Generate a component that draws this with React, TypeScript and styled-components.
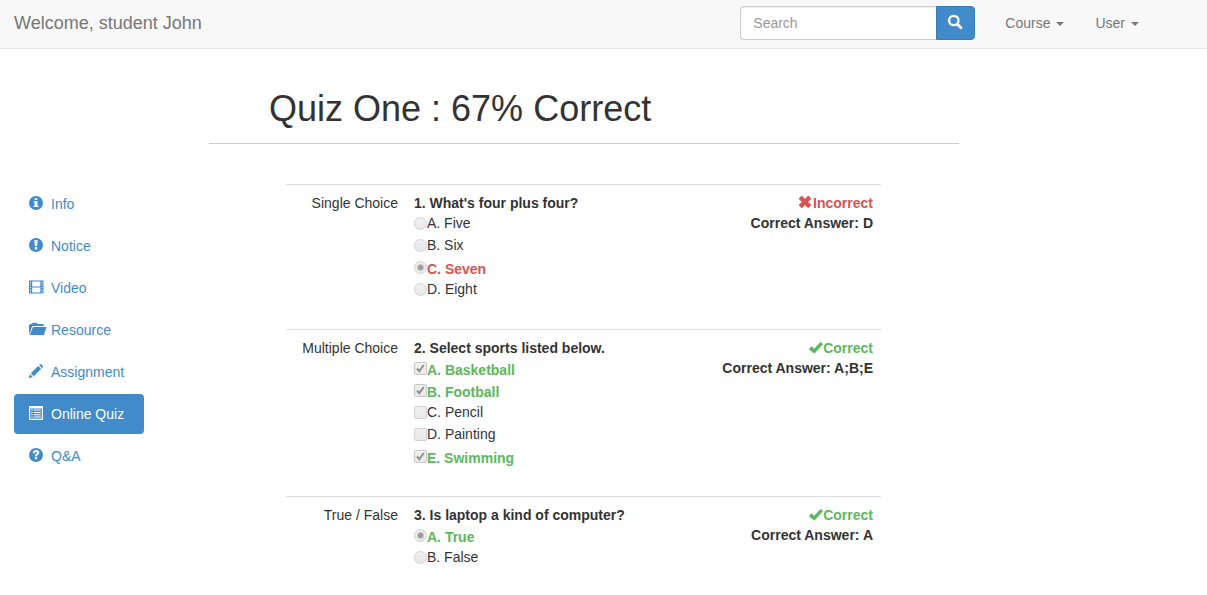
import React from "react";
import styled, { createGlobalStyle } from "styled-components";

const GlobalStyle = createGlobalStyle`
  *, *::before, *::after { box-sizing: border-box; }
  body {
    margin: 0;
    background: #fff;
    color: #333;
    font: 14px/20px "Liberation Sans", Arial, sans-serif;
  }
`;

const BLUE = "#428bca";
const GREEN = "#5cb85c";
const RED = "#d9534f";

const Navbar = styled.header`
  display: flex;
  align-items: flex-start;
  justify-content: space-between;
  height: 49px;
  padding: 0 53px 0 14px;
  background: #f8f8f8;
  border-bottom: 1px solid #e7e7e7;
`;

const Brand = styled.span`
  padding-top: 13px;
  color: #777;
  font-size: 18px;
`;

const NavRight = styled.div`
  display: flex;
  gap: 1px;
`;

const SearchForm = styled.form`
  display: flex;
  margin: 6px 14px 0 0;
`;

const SearchInput = styled.input`
  width: 196px;
  height: 34px;
  padding: 6px 12px;
  border: 1px solid #ccc;
  border-right: 0;
  border-radius: 4px 0 0 4px;
  background: #fff;
  box-shadow: inset 0 1px 1px rgba(0, 0, 0, 0.075);
  color: #555;
  font: inherit;
  outline: none;
  &::placeholder { color: #999; opacity: 1; }
`;

const SearchButton = styled.button`
  display: flex;
  align-items: center;
  justify-content: center;
  width: 39px;
  height: 34px;
  padding: 0 2px 4px 0;
  border: 1px solid #357ebd;
  border-radius: 0 4px 4px 0;
  background: ${BLUE};
  color: #fff;
  cursor: pointer;
`;

const MenuButton = styled.button`
  display: flex;
  align-items: center;
  gap: 6px;
  height: 46px;
  padding: 0 15px;
  border: 0;
  background: none;
  color: #777;
  font: inherit;
  cursor: pointer;
  &::after {
    content: "";
    margin-top: 2px;
    border: 4px solid transparent;
    border-top-color: currentColor;
    border-bottom: 0;
  }
`;

const Page = styled.div`
  display: grid;
  grid-template-columns: 130px minmax(0, 750px);
  column-gap: 65px;
  padding: 0 14px;
`;

const Sidebar = styled.nav`
  display: flex;
  flex-direction: column;
  gap: 2px;
  padding-top: 135px;
`;

const SideLink = styled.a<{ $active?: boolean }>`
  display: flex;
  align-items: flex-start;
  gap: 8px;
  padding: 10px 15px;
  border-radius: 4px;
  background: ${(p) => (p.$active ? BLUE : "transparent")};
  color: ${(p) => (p.$active ? "#fff" : BLUE)};
  text-decoration: none;
`;

const Icon = styled.svg`
  flex: none;
  width: 14px;
  height: 14px;
  margin-top: 2px;
  overflow: visible;
  fill: currentColor;
`;

const VerdictIcon = styled(Icon)`
  margin-top: 3px;
`;

const Title = styled.h1`
  margin: 0;
  padding: 40px 60px 14px;
  border-bottom: 1px solid #ccc;
  font-size: 36px;
  font-weight: 400;
  line-height: 40px;
`;

const Results = styled.div`
  padding: 40px 78px 0 77px;
`;

const QuizTable = styled.table`
  width: 100%;
  border-collapse: separate;
  border-spacing: 0;
  table-layout: fixed;
`;

const Cell = styled.td<{ $width?: string; $right?: boolean }>`
  width: ${(p) => p.$width ?? "auto"};
  padding: 8px 8px 28px;
  border-top: 1px solid #ddd;
  text-align: ${(p) => (p.$right ? "right" : "left")};
  vertical-align: top;
`;

const Question = styled.fieldset`
  min-width: 0;
  margin: 0;
  padding: 0;
  border: 0;
`;

const Prompt = styled.legend`
  padding: 0;
  font-weight: 700;
`;

const OptionRow = styled.div`
  display: flex;
  align-items: flex-start;
  height: 22px;
`;

const Mark = styled.input`
  appearance: none;
  flex: none;
  width: 13px;
  height: 13px;
  margin: 4px 0 0;
  border: 1px solid #d2d2d2;
  border-radius: ${(p) => (p.type === "radio" ? "50%" : "2px")};
  background: linear-gradient(#f0f0f0, #e8e8e8);
  &[type="radio"]:checked {
    background: radial-gradient(circle, #9c9c9c 0 2px, #ececec 4px);
  }
  &[type="checkbox"]:checked {
    border-color: #c8c8c8;
  }
`;

const CheckSlot = styled.span`
  position: relative;
  display: flex;
`;

const Tick = styled.svg`
  position: absolute;
  top: 4px;
  left: 0;
  width: 13px;
  height: 13px;
  pointer-events: none;
`;

const OptionLabel = styled.label<{ $color?: string }>`
  padding-top: ${(p) => (p.$color ? "2px" : "0")};
  color: ${(p) => p.$color ?? "inherit"};
  font-weight: ${(p) => (p.$color ? 700 : 400)};
`;

const Verdict = styled.div<{ $color: string }>`
  display: flex;
  justify-content: flex-end;
  height: 20px;
  color: ${(p) => p.$color};
  font-weight: 700;
`;

const Answer = styled.div`
  font-weight: 700;
`;

const icons: Record<string, React.ReactNode> = {
  info: (
    <path fillRule="evenodd" d="M7 0a7 7 0 1 1 0 14A7 7 0 0 1 7 0ZM5.6 2.2v1.9h2.7V2.2ZM4.6 5.3v1.2h1v3.2h-1v1.3h4.9V9.7h-1V5.3Z" />
  ),
  notice: (
    <path fillRule="evenodd" d="M7 0a7 7 0 1 1 0 14A7 7 0 0 1 7 0ZM5.2 2.2 5.9 8h2.2l.7-5.8ZM5.8 9v2.4h2.4V9Z" />
  ),
  video: (
    <path fillRule="evenodd" d="M0 .5h14.5v13H0ZM1 2v1.2h1V2Zm0 2.4v1.2h1V4.4Zm0 2.5v1.2h1V6.9Zm0 2.4v1.2h1V9.3Zm0 2.2v1.1h1v-1.1ZM12.5 2v1.2h1V2Zm0 2.4v1.2h1V4.4Zm0 2.5v1.2h1V6.9Zm0 2.4v1.2h1V9.3Zm0 2.2v1.1h1v-1.1ZM3.2 1.5v4.9h8.1V1.5Zm0 6v5h8.1v-5Z" />
  ),
  folder: (
    <path d="M0 12V3.2L1.2 2H3l.8-1.3h4L8.5 2h5.3L15 3.2V4H3.2L1.2 10 0 12ZM4 5H17.6L14.8 13H.7Z" />
  ),
  pencil: (
    <path d="M-.3 14.2 1 10.2l2.9 2.7ZM1.8 9.3 9.2 1.9 12.1 4.8 4.7 12.2ZM10.1 1l.9-.8q.6-.5 1.1 0L13.9 2q.5.5 0 1.1l-.9.8Z" />
  ),
  list: (
    <path fillRule="evenodd" d="M0 0h14v14H0ZM1.2 2.6v10.2h11.6V2.6ZM2.2 3.6h1.5v1H2.2Zm2.5 0h7v1h-7ZM2.2 6h1.5v1H2.2Zm2.5 0h7v1h-7ZM2.2 8.3h1.5v1H2.2Zm2.5 0h7v1h-7ZM2.2 10.6h1.5v1H2.2Zm2.5 0h7v1h-7Z" />
  ),
  help: (
    <path fillRule="evenodd" d="M7 0a7 7 0 1 1 0 14A7 7 0 0 1 7 0ZM3.8 5.3h2.1c0-1 .4-1.4 1.1-1.4s1 .3 1 .8c0 1-2.2 1.1-2.2 3.5h2.3c0-1.5 2.2-1.7 2.2-3.7C10.3 2.8 8.9 2 7.1 2 5.1 2 3.8 3.2 3.8 5.3ZM5.8 9.1v2.2h2.3V9.1Z" />
  ),
  remove: (
    <path d="M.1 2.3 2.3.1q.5-.5 1 0L6 2.9 8.7.1q.5-.5 1 0l2.200 2.200q.4.500 0 1L9 6l2.900 2.600q.4.500 0 1l-2.200 2.200q-.5.500-1 0L6 9l-2.700 2.800q-.5.500-1 0L.1 9.600q-.4-.5 0-1L3 6 .1 3.300q-.4-.5 0-1Z" />
  ),
  ok: (
    <path d="M.2 7.7 2.2 5.6q.4-.4.8 0L5.2 7.7 11.2 1.2q.4-.4.8 0l1.7 1.5q.4.4 0 .8L5.7 12.2q-.4.4-.8 0L.2 8.5Q-.1 8.1.2 7.7Z" />
  ),
};

const links = [
  ["info", "Info"],
  ["notice", "Notice"],
  ["video", "Video"],
  ["folder", "Resource"],
  ["pencil", "Assignment"],
  ["list", "Online Quiz"],
  ["help", "Q&A"],
];

type Quiz = {
  kind: string;
  prompt: string;
  type: "radio" | "checkbox";
  options: string[];
  chosen: number[];
  correct: boolean;
  answer: string;
};

const quizzes: Quiz[] = [
  {
    kind: "Single Choice",
    prompt: "1. What's four plus four?",
    type: "radio",
    options: ["A. Five", "B. Six", "C. Seven", "D. Eight"],
    chosen: [2],
    correct: false,
    answer: "D",
  },
  {
    kind: "Multiple Choice",
    prompt: "2. Select sports listed below.",
    type: "checkbox",
    options: ["A. Basketball", "B. Football", "C. Pencil", "D. Painting", "E. Swimming"],
    chosen: [0, 1, 4],
    correct: true,
    answer: "A;B;E",
  },
  {
    kind: "True / False",
    prompt: "3. Is laptop a kind of computer?",
    type: "radio",
    options: ["A. True", "B. False"],
    chosen: [0],
    correct: true,
    answer: "A",
  },
];

function QuizRow({ quiz, index }: { quiz: Quiz; index: number }) {
  const color = quiz.correct ? GREEN : RED;
  return (
    <tr>
      <Cell $width="120px" $right>{quiz.kind}</Cell>
      <Cell>
        <Question>
          <Prompt>{quiz.prompt}</Prompt>
          {quiz.options.map((option, i) => {
            const chosen = quiz.chosen.includes(i);
            const id = `q${index}-${i}`;
            return (
              <OptionRow key={id}>
                <CheckSlot>
                  <Mark type={quiz.type} id={id} name={`q${index}`} defaultChecked={chosen} disabled />
                  {chosen && quiz.type === "checkbox" && (
                    <Tick viewBox="0 0 13 13" aria-hidden="true">
                      <path d="M3 6.5 5.3 9.2 9.8 3" fill="none" stroke="#8f8f8f" strokeWidth="2" />
                    </Tick>
                  )}
                </CheckSlot>
                <OptionLabel htmlFor={id} $color={chosen ? color : undefined}>{option}</OptionLabel>
              </OptionRow>
            );
          })}
        </Question>
      </Cell>
      <Cell $width="200px" $right>
        <Verdict $color={color}>
          <VerdictIcon viewBox="0 0 14 14" aria-hidden="true">{icons[quiz.correct ? "ok" : "remove"]}</VerdictIcon>
          {quiz.correct ? "Correct" : "Incorrect"}
        </Verdict>
        <Answer>Correct Answer: {quiz.answer}</Answer>
      </Cell>
    </tr>
  );
}

export default function App() {
  return (
    <>
      <GlobalStyle />
      <Navbar>
        <Brand>Welcome, student John</Brand>
        <NavRight>
          <SearchForm role="search" onSubmit={(e) => e.preventDefault()}>
            <SearchInput type="text" placeholder="Search" aria-label="Search" />
            <SearchButton type="submit" aria-label="Submit search">
              <Icon viewBox="0 0 14 14" aria-hidden="true">
                <circle cx="5.8" cy="5.5" r="4.7" fill="none" stroke="currentColor" strokeWidth="2.3" />
                <path d="m9.4 9.2 3.6 3.5" stroke="currentColor" strokeWidth="2.8" strokeLinecap="round" />
              </Icon>
            </SearchButton>
          </SearchForm>
          <MenuButton type="button" aria-haspopup="menu">Course</MenuButton>
          <MenuButton type="button" aria-haspopup="menu">User</MenuButton>
        </NavRight>
      </Navbar>
      <Page>
        <Sidebar>
          {links.map(([icon, label]) => (
            <SideLink key={label} href={`#${icon}`} $active={icon === "list"}>
              <Icon viewBox="0 0 14 14" aria-hidden="true">{icons[icon]}</Icon>
              {label}
            </SideLink>
          ))}
        </Sidebar>
        <main>
          <Title>Quiz One : 67% Correct</Title>
          <Results>
            <QuizTable>
              <tbody>
                {quizzes.map((quiz, i) => (
                  <QuizRow key={quiz.prompt} quiz={quiz} index={i} />
                ))}
              </tbody>
            </QuizTable>
          </Results>
        </main>
      </Page>
    </>
  );
}
